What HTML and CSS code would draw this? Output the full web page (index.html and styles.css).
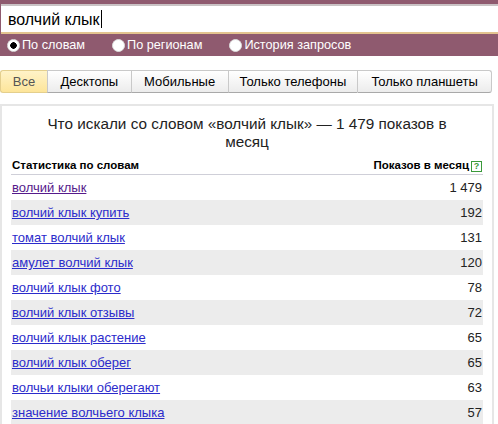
FILE: index.html
```
<!DOCTYPE html>
<html lang="ru">
<head>
  <meta charset="UTF-8" />
  <title>Подбор слов</title>
  <link rel="stylesheet" href="styles.css">
</head>
<body>
  <div class="search">
    <div class="query">волчий клык<span class="caret"></span></div>
    <div class="modes">
      <label class="mode"><span class="radio on"></span>По словам</label>
      <label class="mode"><span class="radio"></span>По регионам</label>
      <label class="mode"><span class="radio"></span>История запросов</label>
    </div>
  </div>

  <div class="tabs">
    <span class="tab active">Все</span>
    <span class="tab">Десктопы</span>
    <span class="tab">Мобильные</span>
    <span class="tab">Только телефоны</span>
    <span class="tab">Только планшеты</span>
  </div>

  <div class="box">
    <h2>Что искали со словом «волчий клык» — 1 479 показов в месяц</h2>
    <table class="stats">
      <tr class="head">
        <th>Статистика по словам</th>
        <th class="num">Показов в месяц<span class="help">?</span></th>
      </tr>
      <tr><td><a class="visited" href="#">волчий клык</a></td><td class="num">1 479</td></tr>
      <tr><td><a href="#">волчий клык купить</a></td><td class="num">192</td></tr>
      <tr><td><a href="#">томат волчий клык</a></td><td class="num">131</td></tr>
      <tr><td><a href="#">амулет волчий клык</a></td><td class="num">120</td></tr>
      <tr><td><a href="#">волчий клык фото</a></td><td class="num">78</td></tr>
      <tr><td><a href="#">волчий клык отзывы</a></td><td class="num">72</td></tr>
      <tr><td><a href="#">волчий клык растение</a></td><td class="num">65</td></tr>
      <tr><td><a href="#">волчий клык оберег</a></td><td class="num">65</td></tr>
      <tr><td><a href="#">волчьи клыки оберегают</a></td><td class="num">63</td></tr>
      <tr><td><a href="#">значение волчьего клыка</a></td><td class="num">57</td></tr>
    </table>
  </div>
</body>
</html>
```

FILE: styles.css
```
body { margin: 0; font-family: "Liberation Sans", Arial, sans-serif; background: #fff; color: #000; overflow: hidden; }

.search { background: #8f5a6f; padding-top: 4px; height: 52px; }
.query { margin-left: 1px; height: 26px; background: #fff; border-top: 2px solid #c9c2c4; border-bottom: 2px solid #e3c38f; padding-left: 7px; font-size: 16px; line-height: 27px; color: #000; }
.caret { display: inline-block; width: 1px; height: 18px; background: #000; vertical-align: -3px; margin-left: 1px; }
.modes { display: flex; padding: 3px 0 0 7px; }
.mode { display: flex; align-items: center; color: #fff; font-size: 12.7px; line-height: 17px; margin-right: 27px; }
.radio { width: 13px; height: 13px; border-radius: 50%; background: #fff; margin-right: 2px; box-sizing: border-box; border: 1px solid #ddd; }
.radio.on { background: radial-gradient(circle, #000 3px, #fff 3.5px); }

.tabs { display: flex; margin: 14px 6px 0 0; }
.tab { height: 21px; line-height: 21px; text-align: center; font-size: 13px; color: #000; border: 1px solid #c9c9c9; border-bottom-color: #a9a9a9; border-right: none; background: linear-gradient(#fff, #ececec); }
.tab:nth-child(1) { width: 46px; border-radius: 3px 0 0 3px; color: #555; background: linear-gradient(#fff3c8, #fde59a); border-color: #e4cf8d; }
.tab:nth-child(2) { width: 83px; }
.tab:nth-child(3) { width: 96px; }
.tab:nth-child(4) { width: 129px; }
.tab:nth-child(5) { width: 133px; border-right: 1px solid #c9c9c9; border-radius: 0 3px 3px 0; }

.box { margin: 11px 4px 0 0; border: 2px solid #e6e6e6; border-bottom: none; padding: 0 9px 0 9px; height: 330px; }
.box h2 { margin: 9px 20px 5px; font-size: 15.3px; font-weight: normal; text-align: center; line-height: 18px; color: #222; }

.stats { width: 100%; border-collapse: collapse; font-size: 13px; }
.stats th { text-align: left; font-size: 11.5px; font-weight: bold; height: 18px; padding: 0 1px; border-bottom: 1px solid #cfcfd8; vertical-align: middle; }
.stats td { height: 25px; padding: 0 1px; vertical-align: middle; }
.stats tr:nth-child(odd) td { background: #ececec; }
.stats .num { text-align: right; }
.stats td.num { color: #222; }
.stats a { color: #2b2bcb; }
.stats a.visited { color: #551a8b; }
.help { display: inline-block; width: 9px; height: 9px; line-height: 9px; border: 1px solid #3a9a3a; color: #3a9a3a; font-size: 9px; text-align: center; margin-left: 2px; vertical-align: 0; }
```
